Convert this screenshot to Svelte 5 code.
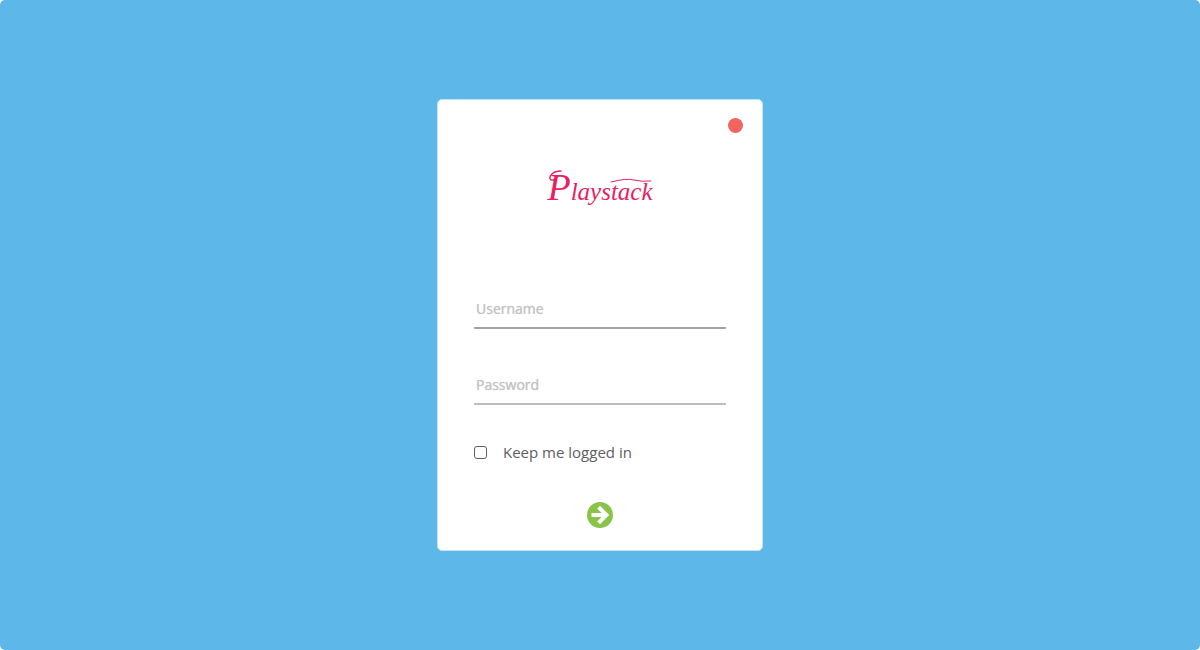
<script>
  let username = $state('');
  let password = $state('');
  let keep = $state(false);
</script>

<main>
  <form class="card" onsubmit={(e) => e.preventDefault()}>
    <button class="close" type="button" aria-label="Close"></button>

    <h1 class="logo">
      <span class="initial">P</span><span>laystack</span>
      <svg viewBox="0 0 108 38" aria-hidden="true">
        <path d="M10 9C4 12 2 8 6 4C8 2 11 1 15 1" stroke-width="1.4" />
        <path d="M65 12Q80 8 88 10T105 11" stroke-width="1" />
      </svg>
    </h1>

    <input class="field" type="text" aria-label="Username" placeholder="Username" bind:value={username} />
    <input class="field light" type="password" aria-label="Password" placeholder="Password" bind:value={password} />

    <label class="keep">
      <input type="checkbox" bind:checked={keep} />
      <span>Keep me logged in</span>
    </label>

    <button class="go" type="submit" aria-label="Log in">
      <svg viewBox="0 0 26 26" aria-hidden="true">
        <circle cx="13" cy="13" r="13" fill="#8bc34a" />
        <path d="M4.5 13H19M11.6 5.2L19.4 13L11.6 20.8" fill="none" stroke="#fff" stroke-width="4" />
      </svg>
    </button>
  </form>
</main>

<style>
  :global(body) {
    margin: 0;
    background: #fff;
  }

  main {
    box-sizing: border-box;
    min-height: 100vh;
    display: flex;
    align-items: center;
    justify-content: center;
    background: #5db7e8;
    border-radius: 5px;
    font-family: "Open Sans", "Noto Sans", sans-serif;
  }

  .card {
    box-sizing: border-box;
    width: 100%;
    max-width: 326px;
    padding: 18px 36px 22px;
    display: flex;
    flex-direction: column;
    background: #fff;
    border: 1px solid #c3e4f6;
    border-radius: 5px;
  }

  button {
    padding: 0;
    border: 0;
    background: none;
    cursor: pointer;
  }

  .close {
    width: 15px;
    height: 15px;
    margin-right: -17px;
    align-self: flex-end;
    border-radius: 50%;
    background: #f1645f;
  }

  .logo {
    position: relative;
    align-self: center;
    width: 108px;
    height: 38px;
    margin: 37px 0 81px;
    color: #e91e63;
    font: italic 400 25px/34px "Liberation Serif", serif;
    text-align: center;
    white-space: nowrap;
  }

  .initial {
    font-size: 38px;
  }

  .logo svg {
    position: absolute;
    inset: 0;
    fill: none;
    stroke: #e91e63;
    stroke-linecap: round;
  }

  .field {
    box-sizing: border-box;
    width: 100%;
    height: 40px;
    margin: 0 0 36px;
    padding: 0 2px;
    border: 0;
    border-bottom: 2px solid #a2a2a4;
    border-radius: 1px;
    background: none;
    color: #606064;
    font: 400 14px/20px "Open Sans", "Noto Sans", sans-serif;
    outline: none;
  }

  .field.light {
    border-color: #bdbdbd;
  }

  .field::placeholder {
    color: #c4c4c4;
    opacity: 1;
    text-shadow: 0 0 1px #c4c4c4;
  }

  .keep {
    display: flex;
    align-items: center;
    gap: 16px;
    color: #606064;
    font-size: 15px;
    line-height: 22px;
  }

  .keep input {
    appearance: none;
    box-sizing: border-box;
    width: 13px;
    height: 13px;
    margin: 0;
    border: 1px solid #606064;
    border-radius: 3px;
  }

  .keep input:checked {
    background: #8bc34a;
  }

  .go {
    width: 26px;
    height: 26px;
    margin-top: 39px;
    align-self: center;
  }

  .go svg {
    display: block;
  }
</style>
